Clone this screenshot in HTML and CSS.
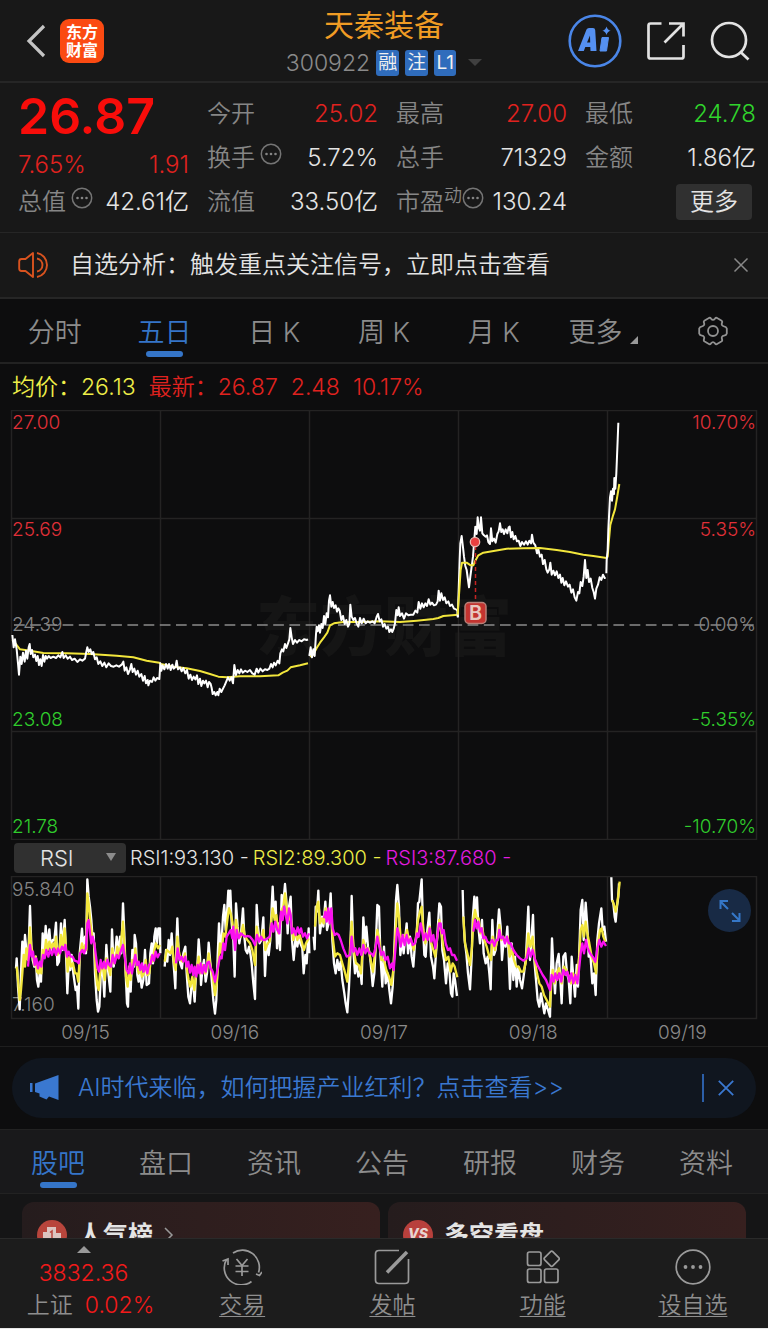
FILE: index.html
```html
<!DOCTYPE html>
<html lang="zh-CN">
<head>
  <meta charset="UTF-8" />
  <title>天秦装备 300922</title>
  <meta name="viewport" content="width=device-width, initial-scale=1.0" />
  <link rel="stylesheet" href="styles.css">
</head>
<body>

<div class="app">
  <!-- Header -->
  <header class="header">
    <div class="header-left">
      <button class="icon-btn" aria-label="返回">
        <svg width="20" height="34" viewBox="0 0 20 34"><path d="M18 2 3 17 18 32" fill="none" stroke="#c4c4c4" stroke-width="3.2"/></svg>
      </button>
      <div class="logo"><span>东方</span><span>财富</span></div>
    </div>
    <div class="header-title">
      <h1>天秦装备</h1>
      <div class="code-row">
        <span class="code">300922</span>
        <span class="badge">融</span>
        <span class="badge">注</span>
        <span class="badge">L1</span>
        <svg class="code-arrow" width="14" height="8" viewBox="0 0 14 8"><path d="M0 0h14L7 7z" fill="#404040"/></svg>
      </div>
    </div>
    <div class="header-right">
      <button class="icon-btn" aria-label="AI">
        <svg width="54" height="54" viewBox="0 0 54 54">
          <circle cx="27" cy="27" r="25.3" fill="none" stroke="#4a86e8" stroke-width="2.6"/>
          <path d="M10 37 18.500 15.500Q19.200 14 21 14h4q2 0 2.200 2L28.500 37h-6l-.2-4h-5l-1.500 4zM19 28.500h3.200l-.2-7z" fill="#5590f0" fill-rule="evenodd"/>
          <path d="M34 23.500h6.500L38.500 37H32z" fill="#5590f0" stroke="#5590f0" stroke-linejoin="round"/>
          <path d="M38.500 12.500q.8 3.600 4.200 4.300-3.400.8-4.200 4.300-.8-3.500-4.200-4.300 3.400-.7 4.200-4.300z" fill="#5590f0"/>
        </svg>
      </button>
      <button class="icon-btn" aria-label="分享">
        <svg width="40" height="40" viewBox="0 0 40 40" fill="none" stroke="#e2e2e2" stroke-width="2.700">
          <path d="M15.500 2.500H4.500Q2.500 2.500 2.500 4.500v31q0 2 2 2h31q2 0 2-2V24M23 2.500h14.500V15.500M37 3 18.500 21.500"/>
        </svg>
      </button>
      <button class="icon-btn" aria-label="搜索">
        <svg width="40" height="40" viewBox="0 0 40 40" fill="none" stroke="#e2e2e2" stroke-width="2.700">
          <circle cx="19" cy="19" r="17"/><path d="m30 30.500 8.500 8"/>
        </svg>
      </button>
    </div>
  </header>

  <!-- Quote -->
  <section class="quote">
    <div class="col">
      <div class="price">26.87</div>
      <div class="row change"><span class="red">7.65%</span><span class="red">1.91</span></div>
      <div class="row"><span class="name">总值<svg class="more-dots" viewBox="0 0 22 22"><use href="#dots"/></svg></span><span>42.61亿</span></div>
    </div>
    <div class="col">
      <div class="row"><span class="name">今开</span><span class="red">25.02</span></div>
      <div class="row"><span class="name">换手<svg class="more-dots" viewBox="0 0 22 22"><use href="#dots"/></svg></span><span>5.72%</span></div>
      <div class="row"><span class="name">流值</span><span>33.50亿</span></div>
    </div>
    <div class="col">
      <div class="row"><span class="name">最高</span><span class="red">27.00</span></div>
      <div class="row"><span class="name">总手</span><span>71329</span></div>
      <div class="row"><span class="name">市盈<small>动</small><svg class="more-dots tight" viewBox="0 0 22 22"><use href="#dots"/></svg></span><span>130.24</span></div>
    </div>
    <div class="col">
      <div class="row"><span class="name">最低</span><span class="green">24.78</span></div>
      <div class="row"><span class="name">金额</span><span>1.86亿</span></div>
      <div class="row end"><button class="more-btn">更多</button></div>
    </div>
  </section>

  <!-- Notice -->
  <section class="notice">
    <svg width="32" height="28" viewBox="0 0 32 28" fill="none" stroke="#d9531f" stroke-width="1.900">
      <path d="M15 2v24L7.500 20H3.500Q1.200 20 1.200 17.500v-7Q1.200 8 3.500 8h4z" stroke-linejoin="round"/>
      <path d="M19 7.500a6.600 6.600 0 0 1 0 13M19 2a12.200 12.200 0 0 1 0 24"/>
    </svg>
    <p>自选分析：触发重点关注信号，立即点击查看</p>
    <button class="icon-btn" aria-label="关闭">
      <svg width="16" height="16" viewBox="0 0 16 16"><path d="m1.500 1.500 13 13m0-13-13 13" stroke="#888" stroke-width="1.500"/></svg>
    </button>
  </section>

  <!-- Chart tabs -->
  <nav class="tabs chart-tabs">
    <button>分时</button>
    <button class="active">五日</button>
    <button>日 K</button>
    <button>周 K</button>
    <button>月 K</button>
    <button class="has-corner">更多<svg width="8" height="8" viewBox="0 0 8 8"><path d="M8 0v8H0z" fill="#999"/></svg></button>
    <button aria-label="设置">
      <svg width="30" height="30" viewBox="0 0 30 30" fill="none" stroke="#929292" stroke-width="1.800">
        <path d="M10.500 2.200Q12 1.200 13 2.600 15 5 17 2.600 18 1.200 19.500 2.200L23.300 4.400Q24.700 5.300 24 6.800 23 9.800 26 10.300 28.300 10.600 28.800 12.500V17.500Q28.300 19.400 26 19.700 23 20.200 24 23.200 24.700 24.700 23.300 25.600L19.500 27.800Q18 28.800 17 27.400 15 25 13 27.400 12 28.800 10.500 27.800L6.700 25.600Q5.300 24.700 6 23.200 7 20.200 4 19.700 1.700 19.400 1.200 17.500V12.500Q1.700 10.600 4 10.300 7 9.800 6 6.800 5.300 5.300 6.700 4.400z"/>
        <circle cx="15" cy="15" r="5"/>
      </svg>
    </button>
  </nav>

  <!-- Price chart -->
  <section class="chart">
    <div class="legend"><span class="yellow">均价：26.13</span><span class="red">最新：26.87</span><span class="red">2.48</span><span class="red">10.17%</span></div>
    <svg class="plot" viewBox="0 0 768 430">
      <text class="watermark" x="256" y="240">东方财富</text>
      <g class="grid">
        <path d="M11.500.5H756.500V429.500H11.500zM11.500 108.500H756.500M11.500 321.500H756.500M160.500 0V430M309.500 0V430M458.500 0V430M607.500 0V430"/>
      </g>
      <path d="M14 215H756" stroke="#8a8a8a" stroke-width="1.700" stroke-dasharray="10.700 5.500"/>
      <svg viewBox="0 0 2304 1290" width="768" height="430">
        <g class="series" transform="translate(0 450)">
          <polyline class="s-yellow" points="37,240 50,255 60,268 90,272 130,279 200,280 270,282 350,287 400,292 440,302 478,308 483,312 520,320 560,325 600,333 630,342 655,350 680,352 720,349 780,349 835,346 848,338 862,332 872,322 900,316 924,310"/>
          <polyline class="s-white" points="37,225 41,262 45,238 50,268 54,310 57,344 61,290 65,312 69,278 74,305 78,272 82,296 86,262 89,252 92,282 96,270 100,292 105,284 109,303 113,288 117,315 121,298 125,318 129,285 133,305 137,288 141,296 146,288 152,294 160,290 168,294 175,286 181,292 187,276 191,294 197,286 203,296 210,290 216,300 224,296 232,306 240,298 247,302 255,296 258,280 262,262 266,276 271,268 275,282 280,276 285,298 290,292 295,312 301,304 307,318 313,308 319,322 326,310 333,318 341,320 349,316 357,320 365,314 370,305 374,332 379,322 384,342 390,328 394,312 398,336 403,326 408,344 413,332 418,350 424,342 429,362 434,348 438,370 443,360 445,376 450,362 456,366 461,352 466,362 471,354 478,357 481,310 484,332 488,316 493,328 498,312 503,326 507,312 512,330 517,314 521,326 526,322 530,302 534,328 540,322 545,334 550,324 556,340 561,330 566,356 571,344 576,360 581,350 586,358 591,346 595,372 600,356 604,378 609,362 613,370 618,362 623,382 627,366 632,372 635,384 638,402 643,396 647,406 652,396 655,406 659,386 664,396 669,386 674,376 679,364 684,352 689,362 694,352 699,370 703,315 708,345 713,330 718,340 723,328 728,338 735,332 742,336 750,330 757,340 764,344 770,326 775,338 781,326 788,334 795,328 802,330 808,326 813,312 818,322 822,308 827,316 833,302 838,310 841,280 846,268 850,274 855,252 859,264 864,250 868,238 871,204 875,232 879,252 885,240 891,248 898,240 905,244 912,238 920,240 924,238"/>
        </g>
        <g class="series" transform="translate(900 450)">
          <polyline class="s-yellow" points="30,290 40,284 50,264 60,248 72,232 82,218 90,196 102,190 130,186 180,186 240,184 300,186 350,182 400,177 415,174 430,168 474,164"/>
          <polyline class="s-white" points="28,288 32,262 36,292 40,268 44,288 48,222 50,200 53,214 57,196 60,218 64,192 68,204 72,168 76,192 80,160 84,172 87,122 90,106 94,140 98,126 102,144 107,136 111,155 115,145 119,152 124,180 129,168 134,192 139,180 144,200 148,192 151,134 155,170 160,180 165,174 170,190 175,200 180,174 185,190 191,176 197,190 203,184 210,188 217,184 224,190 230,170 234,162 239,184 244,178 249,200 254,192 259,206 264,200 268,216 273,208 277,216 281,206 285,190 289,150 293,166 296,142 300,168 306,160 312,176 318,160 325,166 332,164 340,164 346,152 352,158 356,126 361,146 366,130 371,142 376,130 381,138 386,118 391,134 396,128 402,136 408,134 413,124 416,92 420,122 424,100 429,120 434,112 439,130 445,124 450,138 456,134 462,146 468,148 472,152 474,172"/>
        </g>
        <g class="series" transform="translate(1320 0)">
          <polyline class="s-white" points="53,622 56,540 59,450 61,400 65,378 69,412 72,440 76,468 80,480 84,510 87,532 91,500 95,470 99,440 102,400 106,350 110,372 113,322 116,352 120,362 123,322 127,370 132,376 137,380 141,376 145,396 150,402 153,355 157,394 162,386 167,398 172,372 176,364 180,340 184,366 188,358 192,372 197,358 202,370 206,352 209,350 213,382 217,366 221,388 226,378 231,394 236,392 241,408 246,396 252,404 258,394 263,404 268,392 273,400 276,374 280,398 286,406 291,430 295,418 300,440 305,434 309,462 314,450 319,478 323,488 328,478 331,458 335,494 340,482 345,496 350,484 355,504 360,494 364,518 368,504 373,526 378,514 384,530 389,524 394,548 399,538 404,562 409,572 414,546 418,550 422,516 427,528 431,500 435,450 439,504 443,480 447,516 452,506 457,534 461,546 465,566 469,536 474,524 479,502 484,510 489,494 494,504 497,504"/>
          <polyline class="s-yellow" points="53,614 58,540 62,480 66,458 80,458 92,466 100,466 106,452 115,436 130,428 165,422 200,416 250,415 300,414 350,420 390,426 430,434 460,438 500,444 503,440 506,400 511,345 518,320 525,298 530,270 535,240 538,222"/>
          <polyline class="s-white" points="499,490 500,450 503,420 505,360 508,300 510,262 513,244 516,272 519,236 522,252 523,204 526,236 529,190 531,140 533,90 535,38"/>
        </g>
      </svg>
      <!-- Buy marker -->
      <path d="M475.500 136V192" stroke="#c42222" stroke-width="1.500" stroke-dasharray="4 3"/>
      <circle cx="475" cy="132" r="4.700" fill="#e84040" stroke="#e8b8b0" stroke-width="1.300"/>
      <rect x="465" y="192.500" width="21" height="21" rx="4" fill="#c43430" stroke="#b88078" stroke-width="1.500"/>
      <text class="buy" x="475.500" y="210">B</text>
      <g class="axis">
        <text class="up" x="12" y="19">27.00</text>
        <text class="up" x="12" y="126">25.69</text>
        <text x="12" y="221">24.39</text>
        <text class="down" x="12" y="316">23.08</text>
        <text class="down" x="12" y="423">21.78</text>
      </g>
      <g class="axis right">
        <text class="up" x="756" y="19">10.70%</text>
        <text class="up" x="756" y="126">5.35%</text>
        <text x="756" y="221">0.00%</text>
        <text class="down" x="756" y="316">-5.35%</text>
        <text class="down" x="756" y="423">-10.70%</text>
      </g>
    </svg>
  </section>

  <!-- RSI -->
  <section class="rsi">
    <div class="rsi-bar">
      <label class="picker">
        <select aria-label="指标"><option>RSI</option><option>MACD</option><option>KDJ</option></select>
        <svg width="10" height="8" viewBox="0 0 10 8"><path d="M0 0h10L5 8z" fill="#8c8c8c"/></svg>
      </label>
      <span>RSI1:93.130 -</span><span class="yellow">RSI2:89.300 -</span><span class="magenta">RSI3:87.680 -</span>
    </div>
    <div class="rsi-plot">
      <svg class="plot" viewBox="0 0 768 144">
        <g class="grid"><path d="M11.500.5H756.500V142.500H11.500zM160.500 0V143M309.500 0V143M458.500 0V143M607.500 0V143"/></g>
        <g class="axis">
          <text x="12" y="20">95.840</text>
          <text x="12" y="135">7.160</text>
        </g>
        <svg viewBox="0 0 2304 432" width="768" height="144">
          <g class="series" transform="translate(0 -108)">
            <polyline class="s-white" points="48,385 50,355 52,390 54,440 59,508 63,400 67,305 71,370 75,285 80,340 85,350 90,198 94,320 98,360 103,380 107,350 111,420 115,440 119,400 123,425 128,280 132,340 137,258 142,320 148,268 153,330 158,300 163,300 168,248 172,375 177,365 183,250 187,330 194,240 198,340 202,460 207,360 211,390 215,345 220,400 227,450 231,440 235,506 239,340 246,266 250,330 255,290 258,340 262,118 266,170 270,200 274,240 278,300 281,280 285,400 290,480 294,515 298,500 304,370 309,400 313,470 319,315 325,400 331,455 336,268 341,380 346,340 350,290 356,340 360,290 364,340 369,190 373,280 377,400 381,490 384,500 388,380 392,455 397,330 402,380 404,285 408,310 412,405 416,425 420,400 425,443 430,420 435,330 440,435 447,430 451,340 455,310 459,370 463,290 467,265 471,310 475,265 480,265 481,340"/>
            <polyline class="s-yellow" points="50,380 55,430 59,480 63,450 67,400 71,345 75,380 79,325 84,360 90,262 94,320 98,340 103,375 107,350 111,395 116,400 120,375 124,400 128,330 133,345 138,300 143,330 148,305 153,325 158,310 163,325 168,290 172,345 178,330 183,285 188,325 194,265 198,325 203,395 208,350 213,380 219,370 225,400 230,400 235,425 239,350 246,310 251,335 256,315 259,330 262,160 266,190 270,235 274,270 278,300 283,310 287,390 292,435 296,450 300,400 305,375 310,390 314,420 319,355 325,380 331,405 337,325 342,370 347,355 352,320 357,345 362,320 369,245 373,310 378,410 383,440 388,380 392,420 397,360 402,375 406,325 411,375 416,400 421,385 426,410 432,400 437,360 442,405 448,400 453,350 458,365 463,330 468,310 474,325 480,315"/>
            <polyline class="s-magenta" points="84,380 90,315 95,350 99,335 104,375 109,355 114,385 119,365 124,380 129,345 134,355 139,330 145,350 150,328 156,345 162,325 168,345 174,325 180,340 186,320 192,330 196,315 201,350 206,335 212,350 218,350 224,362 232,365 236,370 240,340 247,330 252,340 258,325 262,250 266,240 270,280 274,310 278,290 283,310 288,350 292,380 297,395 302,360 307,385 312,365 317,385 322,360 328,375 333,380 338,345 344,370 350,345 356,355 362,335 369,315 374,350 380,390 386,400 390,370 396,400 401,370 406,345 411,375 416,365 421,390 426,370 431,395 436,375 442,400 447,375 452,370 457,345 462,362 467,335 473,352 479,340"/>
            <polyline class="s-white" points="494,380 498,330 502,365 506,300 510,345 515,280 519,350 523,400 526,445 530,290 532,235 536,340 541,370 546,385 550,340 556,320 560,400 565,470 570,490 575,430 580,440 584,485 588,400 592,380 596,298 600,350 603,435 608,380 612,360 617,425 621,400 626,308 631,370 636,430 640,480 645,521 649,480 653,350 657,250 661,330 665,300 669,230 673,195 677,270 681,220 685,152 688,200 691,152 695,250 700,300 704,410 708,190 713,260 718,310 723,280 729,205 733,290 737,330 742,340 747,320 751,340 755,370 760,430 765,477 770,195 774,260 779,310 784,300 790,232 795,408 800,300 806,345 811,300 815,200 818,140 822,230 827,185 831,325 836,250 840,330 845,165 849,200 855,132 859,180 863,280 867,200 872,170 876,300 881,360 887,290 892,320 897,290 901,310 907,325 911,400 916,345 920,370 926,265 928,340"/>
            <polyline class="s-yellow" points="494,365 500,330 506,335 512,340 517,320 522,370 527,390 532,290 537,335 542,360 548,365 555,340 560,385 566,420 571,440 577,410 583,450 589,395 596,350 602,400 609,375 616,400 621,385 626,340 632,380 638,410 645,465 650,430 655,370 660,310 665,340 670,280 676,290 682,240 687,205 692,220 697,245 703,300 708,240 714,280 722,290 729,255 735,290 742,300 750,310 757,330 765,375 770,260 776,295 784,300 790,270 796,330 803,310 809,305 814,240 818,205 824,240 829,225 835,280 840,255 845,210 850,200 855,160 860,200 865,240 870,215 874,250 880,300 886,275 892,300 899,285 905,305 912,330 918,310 926,295"/>
            <polyline class="s-magenta" points="528,370 533,325 539,360 545,350 550,365 556,350 560,380 565,365 570,398 575,375 580,405 584,380 589,410 593,375 598,400 602,370 607,400 612,375 617,395 622,368 627,365 632,385 638,395 645,425 650,400 655,375 660,350 665,355 670,310 675,330 680,290 686,280 692,270 697,295 700,260 705,330 710,270 716,295 722,280 728,285 735,290 742,288 750,290 758,300 765,315 771,285 777,305 783,290 789,300 795,300 802,295 809,290 815,250 820,275 826,245 832,270 838,280 843,215 848,240 852,200 857,225 862,250 867,205 872,225 876,280 881,265 887,285 893,262 898,280 903,265 909,290 915,280 921,295 927,280"/>
          </g>
          <g class="series" transform="translate(900 -108)">
            <polyline class="s-white" points="41,290 44,328 47,200 51,215 55,152 60,280 66,230 70,260 76,185 81,270 86,250 92,160 97,300 102,370 107,400 112,360 117,390 122,365 127,420 133,460 137,490 142,517 147,440 151,350 155,168 160,330 165,400 170,370 175,410 181,390 185,432 190,232 195,310 199,260 204,320 209,340 214,390 218,438 223,400 228,300 232,195 237,200 241,340 247,440 252,320 257,430 263,400 268,450 273,490 278,440 283,330 288,180 292,135 297,200 301,345 306,300 311,340 316,290 320,250 324,340 330,290 335,350 340,380 345,310 350,290 354,190 358,185 365,118 369,260 373,345 377,350 382,270 388,218 393,350 399,380 403,415 408,340 413,270 418,190 423,200 427,330 432,360 438,430 443,370 448,390 453,460 457,470 461,400 465,420 471,468"/>
            <polyline class="s-yellow" points="45,260 50,200 55,185 60,250 66,235 71,250 77,205 83,240 88,225 93,210 98,290 105,350 112,340 120,345 127,370 133,390 142,425 149,340 155,245 161,330 168,370 176,375 183,400 190,300 197,325 205,325 212,360 219,395 226,330 232,270 238,300 244,360 252,360 259,390 267,410 274,435 280,390 287,270 292,190 298,240 303,310 310,285 316,290 321,270 327,300 333,300 341,330 348,290 354,240 360,215 365,200 370,270 376,310 382,285 389,260 394,310 400,330 406,350 412,290 418,240 424,280 430,320 438,360 445,350 452,395 458,370 464,380 472,412"/>
            <polyline class="s-magenta" points="72,235 76,215 80,245 85,205 89,250 94,205 98,265 104,285 110,280 116,285 122,300 130,325 140,350 150,345 155,290 160,335 166,325 172,345 178,325 184,345 190,315 196,340 202,325 208,340 214,340 220,348 226,325 232,290 238,320 244,345 250,335 256,360 263,350 270,385 276,370 281,390 286,330 292,265 297,285 302,320 308,285 314,315 320,285 326,310 332,295 338,315 345,310 351,280 356,290 362,250 366,270 371,300 377,280 383,300 389,265 394,305 400,285 406,325 412,290 417,250 422,250 426,280 431,270 437,310 444,330 450,325 456,345 463,345 471,362"/>
            <polyline class="s-white" points="488,150 490,230 494,300 499,340 504,400 510,448 515,350 518,240 523,170 527,230 531,172 535,260 540,310 546,240 551,340 557,370 563,350 568,400 572,448 577,240 582,345 587,330 592,280 597,208 602,260 606,360 611,300 617,320 622,260 626,350 630,447 635,310 640,420 645,350 650,440 655,380 660,420 666,445 672,400 678,350 685,200 690,360 694,300 699,225 703,360 708,420 713,480 718,500 723,460 728,490 733,520 738,490 744,510 750,530 753,400 756,295 760,380 765,460 770,370 776,342 780,400 785,490 790,350 796,340 801,400 806,420 811,490 815,350 820,410 825,470 830,375 834,440 838,330 842,210 847,180 851,300 857,188 862,260 866,350 871,340 877,430 882,400 887,465 892,300 897,250 904,205 908,270 913,260 918,305"/>
            <polyline class="s-yellow" points="490,230 495,310 502,340 510,375 516,320 520,240 525,210 530,235 536,235 541,280 547,265 553,300 560,320 568,350 573,360 578,290 585,330 592,300 598,255 604,300 610,290 617,305 623,290 629,350 636,330 642,360 649,380 656,380 663,395 670,395 677,370 685,280 691,320 698,290 704,360 711,400 718,430 725,440 732,465 740,480 750,500 754,430 758,390 764,430 770,400 777,385 785,430 792,380 799,390 807,410 813,430 819,400 826,430 832,400 838,350 842,270 847,255 852,290 857,245 862,280 868,310 875,350 882,370 888,400 894,310 900,270 905,265 910,290 916,305"/>
            <polyline class="s-magenta" points="520,275 525,240 530,265 535,245 540,275 545,265 550,295 556,290 562,305 570,310 577,300 583,318 589,300 594,300 598,270 603,295 609,290 615,310 621,290 626,310 632,310 640,330 650,345 660,355 670,362 680,355 686,325 692,350 698,330 704,355 712,375 720,390 728,405 738,420 750,450 755,405 761,425 766,400 772,420 778,400 784,425 790,390 796,405 802,395 808,425 814,400 820,430 826,405 832,430 837,390 842,340 847,310 852,340 858,300 863,325 870,340 878,350 886,365 892,325 898,300 904,320 910,305 918,318"/>
            <polyline class="s-white" points="934,112 936,180 940,190 944,230 947,245 951,200 955,170 957,130"/>
            <polyline class="s-yellow" points="937,180 942,195 947,215 951,195 955,165 959,125"/>
          </g>
        </svg>
      </svg>
      <button class="expand" aria-label="全屏">
        <svg width="22" height="22" viewBox="0 0 22 22" fill="none" stroke="#3577c8" stroke-width="2">
          <path d="M9 1H1.500V9M1.500 1.500 9 9M13 21h7.500V13M20.500 20.500 13 13"/>
        </svg>
      </button>
    </div>
    <div class="dates"><span>09/15</span><span>09/16</span><span>09/17</span><span>09/18</span><span>09/19</span></div>
  </section>

  <!-- Banner -->
  <section class="banner">
    <svg width="30" height="28" viewBox="0 0 30 28" fill="#3a78d0">
      <path d="M0 9h2.500v9H0zM5 9.500 28.500 1v25L19 22.500 16.500 25.500 9.500 22.500V19.500L5 18z"/>
    </svg>
    <a href="#">AI时代来临，如何把握产业红利？点击查看&gt;&gt;</a>
    <button class="banner-close" aria-label="关闭">
      <svg width="16" height="16" viewBox="0 0 16 16"><path d="m.8.800 14.400 14.400m0-14.400L.8 15.200" stroke="#3a78d0" stroke-width="1.800"/></svg>
    </button>
  </section>

  <!-- Info tabs -->
  <nav class="tabs info-tabs">
    <button class="active">股吧</button>
    <button>盘口</button>
    <button>资讯</button>
    <button>公告</button>
    <button>研报</button>
    <button>财务</button>
    <button>资料</button>
  </nav>

  <section class="feed">
    <article class="card">
      <svg width="30" height="30" viewBox="0 0 30 30">
        <circle cx="15" cy="15" r="15" fill="#b8453c"/>
        <path d="M6 12h4v-5h9v6h5v10H6z" fill="#dcc4c0"/><path d="M13 12.500l2-1.500V20" fill="none" stroke="#b8453c" stroke-width="1.500"/>
      </svg>
      <h2>人气榜</h2>
      <svg width="10" height="16" viewBox="0 0 10 16"><path d="m1 1 7 7-7 7" fill="none" stroke="#999" stroke-width="1.500"/></svg>
    </article>
    <article class="card">
      <svg width="30" height="30" viewBox="0 0 30 30">
        <circle cx="15" cy="15" r="15" fill="#b8403c"/>
        <text class="vs" x="15" y="19">VS</text>
      </svg>
      <h2>多空看盘</h2>
    </article>
  </section>

  <!-- Bottom bar -->
  <footer class="bottom">
    <div class="index">
      <svg width="14" height="7" viewBox="0 0 14 7"><path d="M0 7h14L7 0z" fill="#999"/></svg>
      <div class="index-value">3832.36</div>
      <div class="index-row"><span>上证</span><span class="index-pct">0.02%</span></div>
    </div>
    <a href="#">
      <svg width="40" height="36" viewBox="0 0 40 36" fill="none" stroke="#9a9a9a" stroke-width="1.700">
        <path d="M11 4A17 17 0 0 1 36.500 23.500M29.500 32.500A17 17 0 0 1 4.500 10.500M.5 12l5.500-2v6M34 25l3.500 1.500 2.500-3.500"/>
        <path d="m14.500 10 5.500 6.500L25.500 10M20 16.500V27M13.500 17h13M13.500 22.500h13"/>
      </svg>
      <span>交易</span>
    </a>
    <a href="#">
      <svg width="36" height="36" viewBox="0 0 36 36" fill="none" stroke="#9a9a9a" stroke-width="1.700">
        <path d="M25 1.500H5Q1.500 1.500 1.500 5V31Q1.500 34.500 5 34.500H31Q34.500 34.500 34.500 31V10"/>
        <path d="M13 23.500 33 3" stroke-width="3.500"/>
      </svg>
      <span>发帖</span>
    </a>
    <a href="#">
      <svg width="34" height="36" viewBox="0 0 34 36" fill="none" stroke="#9a9a9a" stroke-width="1.700">
        <rect x="1.500" y="3" width="13.500" height="13.500" rx="2"/>
        <rect x="1.500" y="20" width="13.500" height="13.500" rx="2"/>
        <rect x="18.500" y="20" width="13.500" height="13.500" rx="2"/>
        <rect x="20" y="4" width="11.500" height="11.500" rx="1.500" transform="rotate(45 25.700 9.700)"/>
      </svg>
      <span>功能</span>
    </a>
    <a href="#">
      <svg width="36" height="36" viewBox="0 0 36 36">
        <circle cx="18" cy="18" r="16.800" fill="none" stroke="#9a9a9a" stroke-width="1.700"/>
        <g fill="#9a9a9a"><circle cx="10.500" cy="18" r="1.900"/><circle cx="18" cy="18" r="1.900"/><circle cx="25.500" cy="18" r="1.900"/></g>
      </svg>
      <span>设自选</span>
    </a>
  </footer>
</div>

<svg width="0" height="0" class="defs">
  <symbol id="dots" viewBox="0 0 22 22">
    <circle cx="11" cy="11" r="9.700" fill="none" stroke="#757575" stroke-width="1.500"/>
    <g fill="#858585"><circle cx="6.500" cy="11" r="1.300"/><circle cx="11" cy="11" r="1.300"/><circle cx="15.500" cy="11" r="1.300"/></g>
  </symbol>
</svg>

</body>
</html>
```
FILE: styles.css
```css
* {
  box-sizing: border-box;
}

html, body {
  margin: 0;
  padding: 0;
  height: 100vh;
  overflow: hidden;
  background: #0d0d0e;
  color: #e4e4e4;
  font-family: Inter, "Noto Sans CJK SC", sans-serif;
  font-weight: 350;
}

h1, h2, p {
  margin: 0;
}

a {
  color: inherit;
  text-decoration: none;
}

button, select {
  border: none;
  padding: 0;
  background: none;
  color: inherit;
  font: inherit;
  cursor: pointer;
}

svg {
  display: block;
  flex: none;
}

.defs {
  position: absolute;
}

.app {
  height: 100vh;
  display: flex;
  flex-direction: column;
  border-bottom: 1px solid #e8e8e8;
}

.app > * {
  flex: none;
}

.red { color: #e0221f; }
.green { color: #30d42c; }
.yellow { color: #eeee48; }
.magenta { color: #e41be0; }

/* header */
.header {
  display: grid;
  grid-template-columns: 1fr auto 1fr;
  align-items: center;
  height: 83px;
  padding: 0 18px;
  background: #181818;
  border-bottom: 2px solid #262626;
}

.header-left, .header-right {
  display: flex;
  align-items: center;
}

.header-left {
  gap: 14px;
  padding-left: 8px;
}

.header-right {
  justify-content: flex-end;
  gap: 24px;
}

.logo {
  display: flex;
  flex-direction: column;
  align-items: center;
  justify-content: center;
  width: 44px;
  height: 44px;
  border-radius: 9px;
  background: #fb4a12;
  color: #fff;
  font-size: 16px;
  font-weight: 700;
  line-height: 18px;
}

.header-title {
  display: flex;
  flex-direction: column;
  align-items: center;
  gap: 8px;
  padding-top: 3px;
}

.header-title h1 {
  color: #f09c24;
  font-size: 30px;
  font-weight: 400;
  line-height: 34px;
}

.code-row {
  display: flex;
  align-items: center;
  gap: 6px;
}

.code {
  color: #8a8a8a;
  font-size: 23px;
  line-height: 26px;
}

.badge {
  min-width: 22px;
  padding: 0 2px;
  border-radius: 3px;
  background: #2f6cbc;
  color: #f0f0f0;
  font-size: 19px;
  font-weight: 400;
  line-height: 26px;
  text-align: center;
}

.code-arrow {
  margin-left: 6px;
}

/* quote */
.quote {
  display: grid;
  grid-template-columns: repeat(4, 1fr);
  gap: 18px;
  height: 150px;
  padding: 9px 12px 0 18px;
  background: #181818;
  border-bottom: 1px solid #262626;
  font-size: 24px;
  line-height: 44px;
}

.price {
  height: 51px;
  color: #f80d0a;
  font-size: 50px;
  font-weight: 600;
  line-height: 48px;
}

.row {
  display: flex;
  justify-content: space-between;
  height: 44px;
  white-space: nowrap;
}

.change {
  height: 37px;
}

.end {
  justify-content: flex-end;
  padding: 4px 4px 0 0;
}

.name {
  display: flex;
  color: #868686;
}

.name small {
  font-size: 18px;
  line-height: 32px;
}

.more-dots {
  width: 22px;
  height: 22px;
  margin: 7px 0 0 5px;
}

.tight {
  margin-left: 0;
}

.more-btn {
  width: 76px;
  height: 36px;
  border-radius: 4px;
  background: #303030;
  line-height: 36px;
}

/* notice */
.notice {
  display: flex;
  align-items: center;
  gap: 20px;
  height: 66px;
  padding: 0 19px 0 18px;
  background: #181818;
  border-bottom: 2px solid #262626;
}

.notice p {
  flex: 1;
  font-size: 24px;
  line-height: 32px;
}

/* tabs */
.tabs {
  display: flex;
  color: #8c8c8c;
  font-size: 27px;
}

.tabs button {
  position: relative;
  flex: 1;
  display: flex;
  align-items: center;
  justify-content: center;
}

.tabs .active {
  color: #3575c8;
}

.tabs .active::after {
  content: "";
  position: absolute;
  bottom: 5px;
  width: 37px;
  height: 6px;
  border-radius: 3px;
  background: #3575c8;
}

.has-corner svg {
  align-self: flex-end;
  margin: 0 0 18px 8px;
}

.chart-tabs {
  height: 65px;
  border-bottom: 2px solid #222;
}

.info-tabs {
  height: 65px;
  margin-top: 11px;
  padding: 0 8px 0 4px;
  background: #19191b;
  border-top: 1px solid #222;
  border-bottom: 1px solid #222;
}

/* charts */
.legend {
  display: flex;
  gap: 13px;
  height: 46px;
  padding-left: 12px;
  font-size: 23px;
  line-height: 46px;
  white-space: nowrap;
}

.plot {
  width: 100%;
  height: auto;
}

.grid path {
  fill: none;
  stroke: #242323;
  stroke-width: 1.5;
}

.series polyline {
  fill: none;
  stroke-width: 6;
  stroke-linejoin: round;
}

.series .s-white { stroke: #fff; }
.series .s-yellow { stroke: #f2e63c; }
.series .s-magenta { stroke: #fb10f0; }

.rsi .series polyline {
  stroke-width: 7;
}

.watermark {
  fill: #151515;
  font-size: 64px;
  font-weight: 900;
}

.buy {
  fill: #e8c8c0;
  font-size: 20px;
  font-weight: 600;
  text-anchor: middle;
}

.axis {
  fill: #858585;
  font-size: 19px;
}

.axis .up { fill: #e03038; }
.axis .down { fill: #30cc2c; }

.right {
  text-anchor: end;
}

.rsi {
  border-bottom: 1px solid #1e1e1e;
}

.rsi-bar {
  display: flex;
  align-items: center;
  gap: 4px;
  height: 36px;
  padding-left: 14px;
  font-size: 20px;
  white-space: nowrap;
}

.picker {
  position: relative;
}

.picker select {
  width: 112px;
  height: 30px;
  padding-left: 26px;
  border-radius: 4px;
  background: #303030;
  appearance: none;
  font-size: 22px;
}

.picker svg {
  position: absolute;
  top: 10px;
  right: 10px;
}

.rsi-plot {
  position: relative;
}

.expand {
  position: absolute;
  top: 13px;
  right: 17px;
  display: flex;
  align-items: center;
  justify-content: center;
  width: 43px;
  height: 43px;
  border-radius: 50%;
  background: #182a45;
}

.dates {
  display: grid;
  grid-template-columns: repeat(5, 1fr);
  padding: 0 11px;
  color: #8a8a8a;
  font-size: 19px;
  line-height: 26px;
  text-align: center;
}

/* banner */
.banner {
  display: flex;
  align-items: center;
  gap: 18px;
  height: 60px;
  margin: 11px 12px 0;
  padding: 0 22px 0 18px;
  border-radius: 30px;
  background: #10161f;
  color: #3a78d0;
}

.banner a {
  flex: 1;
  font-size: 24px;
  line-height: 32px;
}

.banner-close {
  height: 28px;
  padding-left: 14px;
  border-left: 2px solid #2c5fa8;
}

/* feed */
.feed {
  flex: 1;
  min-height: 0;
  display: flex;
  align-items: flex-start;
  gap: 8px;
  padding: 8px 22px 0;
  background: #151516;
  overflow: hidden;
}

.card {
  flex: 1;
  display: flex;
  align-items: center;
  gap: 11px;
  height: 160px;
  padding: 0 15px 94px;
  border-radius: 12px;
  background: linear-gradient(90deg, #251c1d, #37201f);
}

.card h2 {
  font-size: 25px;
  font-weight: 700;
  line-height: 30px;
}

.vs {
  fill: #e8d4d0;
  font-size: 14px;
  font-weight: 800;
  font-style: italic;
  text-anchor: middle;
}

/* bottom bar */
.bottom {
  display: flex;
  height: 90px;
  background: #1c1c1c;
  border-top: 1px solid #2a2a2a;
  color: #8e8e8e;
}

.index {
  display: flex;
  flex-direction: column;
  align-items: center;
  width: 167px;
  padding-top: 7px;
  font-size: 23px;
}

.index-value {
  margin-top: 4px;
  color: #f21a1a;
  line-height: 32px;
}

.index-row {
  display: flex;
  gap: 12px;
  padding-left: 14px;
  line-height: 32px;
}

.index-pct {
  color: #f21a1a;
}

.bottom a {
  flex: 1;
  display: flex;
  flex-direction: column;
  align-items: center;
  padding-top: 10px;
  font-size: 23px;
  line-height: 40px;
}

.bottom a span {
  text-decoration: underline;
  text-decoration-thickness: 1px;
  text-underline-offset: 3px;
}
```
